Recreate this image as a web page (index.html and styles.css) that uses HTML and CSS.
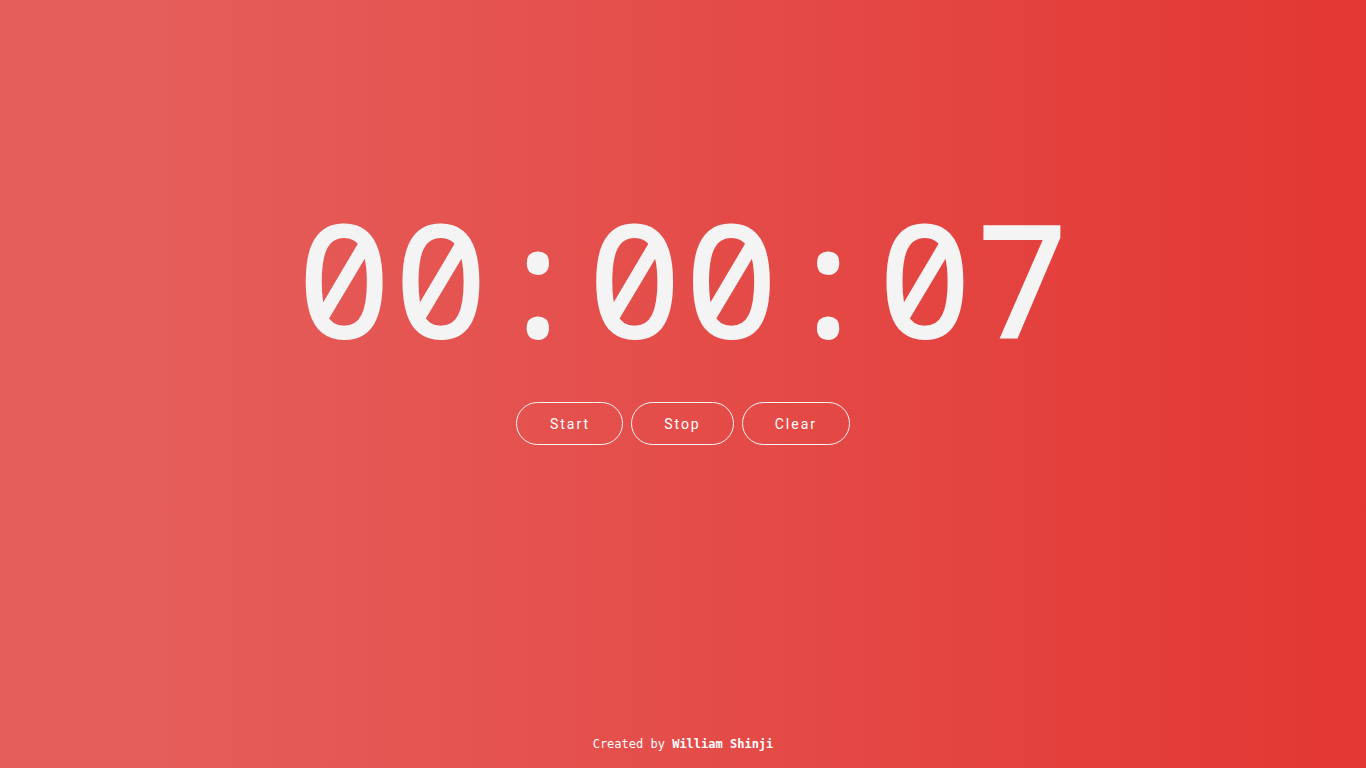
FILE: index.html
```html
<!DOCTYPE html>
<html lang="en">
<head>
<meta charset="utf-8">
<title>Stopwatch</title>
<link rel="stylesheet" href="styles.css">
</head>
<body>
<main class="stopwatch">
  <div class="display"><span class="unit">00</span><span class="sep">:</span><span class="unit">00</span><span class="sep">:</span><span class="unit">07</span></div>
  <div class="controls">
    <button class="btn">Start</button>
    <button class="btn">Stop</button>
    <button class="btn">Clear</button>
  </div>
</main>
<footer class="footer">Created by <strong class="author">William Shinji</strong></footer>
</body>
</html>
```
FILE: styles.css
```css
* { box-sizing: border-box; }
html, body { height: 100%; }
body {
  margin: 0;
  display: flex;
  flex-direction: column;
  background: linear-gradient(to right, #e55e5b 10%, #e33733 100%);
  color: #f5f5f5;
  font-family: Roboto, "Noto Sans", sans-serif;
}
.stopwatch {
  flex: 1;
  display: flex;
  flex-direction: column;
  align-items: center;
  padding-top: 198px;
}
.display {
  font-family: "Noto Sans Mono", "DejaVu Sans Mono", monospace;
  font-size: 158px;
  font-weight: 500;
  letter-spacing: 2px;
  line-height: 1;
  color: #f4f4f4;
  white-space: nowrap;
  padding-left: 2px;
}
.controls {
  display: flex;
  gap: 8px;
  margin-top: 46px;
}
.btn {
  height: 43px;
  padding: 0 32px;
  border: 1px solid #f5f5f5;
  border-radius: 22px;
  background: transparent;
  color: #fff;
  font-family: Roboto, sans-serif;
  font-size: 14px;
  font-weight: 400;
  letter-spacing: 2px;
}
.btn:first-child { padding: 0 32px 0 33px; }
.footer {
  text-align: center;
  font-family: "DejaVu Sans Mono", monospace;
  font-size: 12px;
  color: #fff;
  padding-bottom: 17px;
}
.author { font-weight: bold; }
```
